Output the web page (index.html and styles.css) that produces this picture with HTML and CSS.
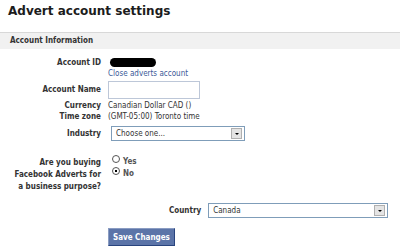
FILE: index.html
```html
<!DOCTYPE html>
<html>
<head>
    <title>Advert account settings</title>
    <meta charset="UTF-8" />
    <link rel="stylesheet" href="styles.css">
</head>
<body>
    <h1 class="pageTitle">Advert account settings</h1>
    <div class="sectionHead">Account Information</div>

    <div class="form">
        <div class="label">Account ID</div>
        <div class="value">
            <span class="redacted"></span>
            <a class="link" href="#">Close adverts account</a>
        </div>

        <div class="label middle">Account Name</div>
        <div class="value"><span class="textBox"></span></div>

        <div class="label">Currency</div>
        <div class="value">Canadian Dollar CAD ()</div>

        <div class="label">Time zone</div>
        <div class="value">(GMT-05:00) Toronto time</div>

        <div class="label middle">Industry</div>
        <div class="value">
            <div class="select industry"><span>Choose one...</span><span class="arrow"></span></div>
        </div>

        <div class="label question">Are you buying Facebook Adverts for a business purpose?</div>
        <div class="value radios">
            <label class="radio"><span class="dot"></span>Yes</label>
            <label class="radio"><span class="dot checked"></span>No</label>
        </div>
    </div>

    <div class="countryRow">
        <div class="label">Country</div>
        <div class="select country"><span>Canada</span><span class="arrow"></span></div>
    </div>

    <div class="actions">
        <button class="saveButton">Save Changes</button>
    </div>
</body>
</html>
```

FILE: styles.css
```css
body
{
    margin: 0;
    font-family: "DejaVu Sans Condensed", "DejaVu Sans", Tahoma, sans-serif;
    font-size: 8px;
    color: #333333;
    background-color: #ffffff;
}

.pageTitle
{
    margin: 0;
    padding: 4px 8px 0 8px;
    height: 28px;
    font-family: "DejaVu Sans", Tahoma, sans-serif;
    font-size: 12px;
    font-weight: bold;
    color: #1c1c1c;
}

.sectionHead
{
    border-top: 1px solid #d8d8d8;
    background-color: #f1f1f1;
    padding: 3px 10px;
    height: 10px;
    font-weight: bold;
    color: #333333;
}

.form
{
    display: grid;
    grid-template-columns: 101px 1fr;
    column-gap: 7px;
    row-gap: 0;
    margin-top: 8px;
}

.label
{
    text-align: right;
    font-weight: bold;
    line-height: 11px;
}

.label.middle
{
    align-self: center;
}

.value
{
    line-height: 11px;
}

.redacted
{
    display: inline-block;
    width: 46px;
    height: 9px;
    border-radius: 5px;
    background-color: #000000;
    margin-left: 2px;
    vertical-align: middle;
}

.link
{
    display: block;
    color: #3b5998;
    text-decoration: none;
}

.textBox
{
    display: block;
    width: 90px;
    height: 16px;
    margin: 2px 0 1px 0;
    border: 1px solid #bdc7d8;
    background-color: #ffffff;
}

.select
{
    display: flex;
    align-items: center;
    justify-content: space-between;
    height: 13px;
    border: 1px solid #7f9db9;
    background-color: #ffffff;
    padding-left: 4px;
}

.select > .arrow
{
    width: 9px;
    height: 9px;
    margin-right: 2px;
    background-color: #e4e4e4;
    border: 1px solid #b0b0b0;
    position: relative;
}

.select > .arrow::after
{
    content: "";
    position: absolute;
    left: 3px;
    top: 4px;
    border-left: 2px solid transparent;
    border-right: 2px solid transparent;
    border-top: 2px solid #000000;
}

.industry
{
    width: 128px;
    margin: 4px 0 4px 3px;
}

.question
{
    margin-top: 12px;
    padding-left: 8px;
    line-height: 12px;
}

.radios
{
    margin-top: 10px;
    display: flex;
    flex-direction: column;
}

.radio
{
    display: flex;
    align-items: center;
    height: 12px;
    font-weight: bold;
    color: #555555;
    margin-left: 4px;
}

.radio > .dot
{
    width: 6px;
    height: 6px;
    border: 1px solid #555555;
    border-radius: 50%;
    margin-right: 3px;
    position: relative;
    top: -2px;
}

.radio > .dot.checked::after
{
    content: "";
    position: absolute;
    left: 2px;
    top: 2px;
    width: 2px;
    height: 2px;
    background-color: #000000;
}

.countryRow
{
    display: flex;
    align-items: center;
    margin-top: 10px;
    margin-left: 169px;
    gap: 7px;
}

.country
{
    width: 174px;
}

.actions
{
    margin: 10px 0 0 108px;
}

.saveButton
{
    font-family: "DejaVu Sans Condensed", "DejaVu Sans", Tahoma, sans-serif;
    font-size: 8px;
    font-weight: bold;
    color: #ffffff;
    background-color: #5b74a8;
    border: 1px solid #29447e;
    border-left-color: #8a9cc2;
    border-top-color: #8a9cc2;
    padding: 0 4px;
    height: 18px;
}
```
